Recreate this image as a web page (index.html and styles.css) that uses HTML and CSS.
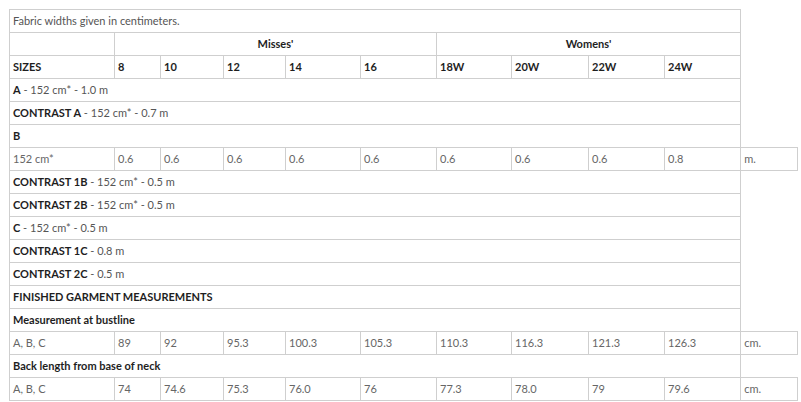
FILE: index.html
```
<!DOCTYPE html>
<html lang="en">
<head>
<meta charset="utf-8">
<title>Fabric widths</title>
<link rel="stylesheet" href="styles.css">
</head>
<body>
<table class="chart">
  <colgroup>
    <col class="c-label">
    <col class="c-8">
    <col class="c-10">
    <col class="c-12">
    <col class="c-14">
    <col class="c-16">
    <col class="c-18">
    <col class="c-20">
    <col class="c-22">
    <col class="c-24">
    <col class="c-unit">
  </colgroup>
  <tbody>
    <tr><td colspan="10" class="note">Fabric widths given in centimeters.</td></tr>
    <tr><td></td><td colspan="5" class="group">Misses'</td><td colspan="4" class="group">Womens'</td></tr>
    <tr class="head"><td>SIZES</td><td>8</td><td>10</td><td>12</td><td>14</td><td>16</td><td>18W</td><td>20W</td><td>22W</td><td>24W</td></tr>
    <tr><td colspan="10"><b>A</b> - 152 cm* - 1.0 m</td></tr>
    <tr><td colspan="10"><b>CONTRAST A</b> - 152 cm* - 0.7 m</td></tr>
    <tr><td colspan="10"><b>B</b></td></tr>
    <tr class="data"><td>152 cm*</td><td>0.6</td><td>0.6</td><td>0.6</td><td>0.6</td><td>0.6</td><td>0.6</td><td>0.6</td><td>0.6</td><td>0.8</td><td>m.</td></tr>
    <tr><td colspan="10"><b>CONTRAST 1B</b> - 152 cm* - 0.5 m</td></tr>
    <tr><td colspan="10"><b>CONTRAST 2B</b> - 152 cm* - 0.5 m</td></tr>
    <tr><td colspan="10"><b>C</b> - 152 cm* - 0.5 m</td></tr>
    <tr><td colspan="10"><b>CONTRAST 1C</b> - 0.8 m</td></tr>
    <tr><td colspan="10"><b>CONTRAST 2C</b> - 0.5 m</td></tr>
    <tr><td colspan="10"><b>FINISHED GARMENT MEASUREMENTS</b></td></tr>
    <tr><td colspan="10"><b>Measurement at bustline</b></td></tr>
    <tr class="data"><td>A, B, C</td><td>89</td><td>92</td><td>95.3</td><td>100.3</td><td>105.3</td><td>110.3</td><td>116.3</td><td>121.3</td><td>126.3</td><td>cm.</td></tr>
    <tr><td colspan="10"><b>Back length from base of neck</b></td></tr>
    <tr class="data"><td>A, B, C</td><td>74</td><td>74.6</td><td>75.3</td><td>76.0</td><td>76</td><td>77.3</td><td>78.0</td><td>79</td><td>79.6</td><td>cm.</td></tr>
  </tbody>
</table>
</body>
</html>
```
FILE: styles.css
```
html, body {
  margin: 0;
  padding: 0;
  background: #ffffff;
}

body {
  padding: 9px 0 0 9px;
  font-family: Lato, "Open Sans", "Liberation Sans", sans-serif;
  font-size: 11px;
  color: #555555;
}

.chart {
  border-collapse: collapse;
  table-layout: fixed;
  width: 789px;
}

.c-label { width: 105px; }
.c-8 { width: 46px; }
.c-10 { width: 63px; }
.c-12 { width: 62px; }
.c-14 { width: 75px; }
.c-16 { width: 76px; }
.c-18 { width: 75px; }
.c-20 { width: 77px; }
.c-22 { width: 76px; }
.c-24 { width: 76px; }
.c-unit { width: 57px; }

.chart tr {
  height: 23px;
}

.chart td {
  border: 1px solid #cfcfcf;
  padding: 0 3px;
  vertical-align: middle;
  white-space: nowrap;
  line-height: 14px;
}

.chart b {
  font-weight: 700;
  color: #1e1e1e;
}

.note {
  color: #555555;
}

.group {
  text-align: center;
  font-weight: 700;
  color: #1e1e1e;
}

.head td {
  font-weight: 700;
  color: #1e1e1e;
}

.data td {
  color: #666666;
}
```
